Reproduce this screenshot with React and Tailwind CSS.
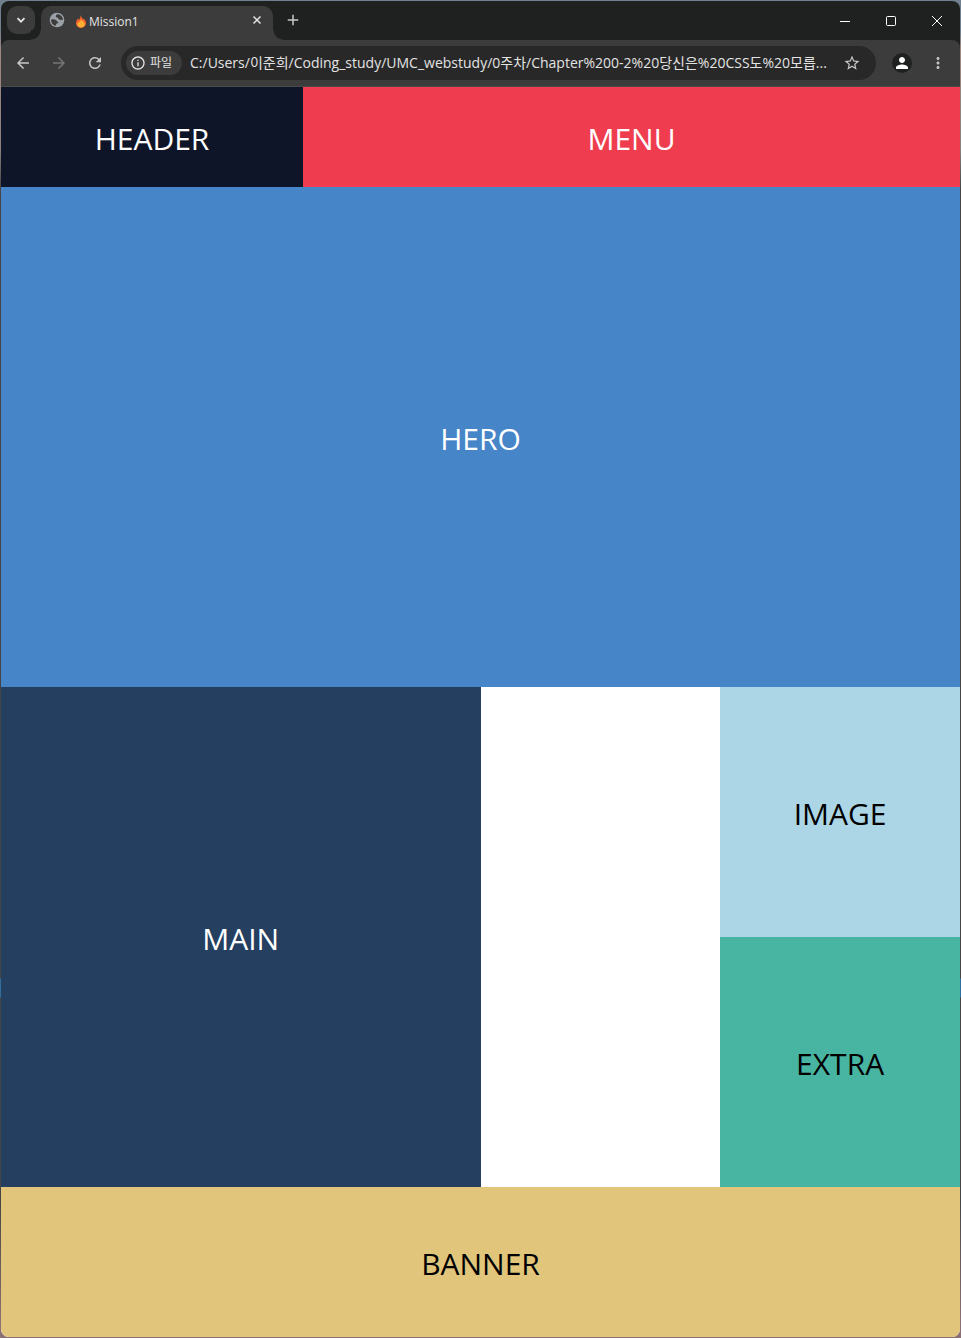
import React from "react";
import {
  MdAdd,
  MdArrowBack,
  MdArrowForward,
  MdInfoOutline,
  MdMoreVert,
  MdPerson,
  MdRefresh,
  MdStarBorder,
} from "react-icons/md";

const ADDRESS =
  "C:/Users/이준희/Coding_study/UMC_webstudy/0주차/Chapter%200-2%20당신은%20CSS도%20모릅...";

function Flame() {
  return (
    <svg viewBox="0 0 10 13" className="h-[13px] w-[10px] shrink-0" aria-hidden="true">
      <path d="M4.4 0C5 2.2 6.3 2.5 7 4.5L7.8 3.6C9 4.8 10 6.3 10 8.1 10 11 7.8 13 5 13S0 11 0 8.1C0 5.6 1.6 4.6 2.2 3.2 2.8 4 2.8 4.6 2.8 5 4.2 3.8 4.6 1.8 4.4 0Z" fill="#f2622a" />
      <path d="M5 4.5C6 5.8 8.8 7.1 8.8 9.3 8.8 11.3 7.1 12.5 5 12.5S1.2 11.3 1.2 9.3C1.2 7.6 4.5 6.7 5 4.5Z" fill="#ffad33" />
    </svg>
  );
}

function Globe() {
  return (
    <svg viewBox="0 0 16 16" className="size-4 shrink-0" aria-hidden="true">
      <circle cx="8" cy="8" r="7.3" fill="#9aa0a6" />
      <path d="M8.7 2.2C7.4 2.3 6.9 3.2 6.9 4.2 6.9 5.3 7.6 5.6 8.8 5.6 9.3 6.9 9.6 7.6 11 7.8L13.9 7.9C13.9 5 11.7 2.4 8.7 2.2Z" fill="#3c3c3c" />
      <path d="M2.1 7.7C3.3 7.2 5.7 7.2 6.8 7.9 8 8.6 8 9.7 9.3 9.9 9.4 11.1 8.5 11.5 7.2 11.7L6.8 13.8C4 13.4 2 10.9 2.1 7.7Z" fill="#3c3c3c" />
    </svg>
  );
}

function TabStrip() {
  return (
    <div className="flex h-[39px] items-end bg-[#1f2120]">
      <div className="flex h-[34px] items-start px-[6px]">
        <button aria-label="Search tabs" className="flex size-[28px] items-center justify-center rounded-[10px] bg-[#3c3c3c] text-[#e3e3e3]">
          <svg viewBox="0 0 10 10" className="size-[10px]"><path d="M1.5 3.2L5 6.7 8.5 3.2" fill="none" stroke="currentColor" strokeWidth="1.8" /></svg>
        </button>
      </div>
      <div className="relative flex h-[34px] w-[232px] items-center rounded-t-[10px] bg-[#3c3c3c] px-2 pb-[6px]">
        <span className="absolute bottom-0 left-[-10px] size-[10px] bg-[radial-gradient(circle_at_0_0,#1f2120_9px,#3c3c3c_10px)]" />
        <span className="absolute bottom-0 right-[-10px] size-[10px] bg-[radial-gradient(circle_at_100%_0,#1f2120_9px,#3c3c3c_10px)]" />
        <Globe />
        <div className="ml-[11px] flex flex-1 items-center gap-[3px] pt-[3px]">
          <Flame />
          <span className="text-[12px] leading-4 text-[#e3e3e3]">Mission1</span>
        </div>
        <button aria-label="Close tab" className="flex size-4 items-center justify-center text-[#e3e3e3]">
          <svg viewBox="0 0 10 10" className="size-[10px]"><path d="M1.5 1.5L8.5 8.5M8.5 1.5L1.5 8.5" stroke="currentColor" strokeWidth="1.5" /></svg>
        </button>
      </div>
      <button aria-label="New tab" className="ml-[11px] flex h-[28px] w-[18px] items-center justify-center self-start pt-[10px] text-[#c7c7c7]">
        <MdAdd className="size-[18px] shrink-0" />
      </button>
      <div className="ml-auto flex h-full text-white">
        <button aria-label="Minimize" className="flex w-[46px] items-center justify-center">
          <svg viewBox="0 0 10 10" className="size-[10px]"><path d="M0 5.5H10" stroke="currentColor" /></svg>
        </button>
        <button aria-label="Maximize" className="flex w-[46px] items-center justify-center">
          <svg viewBox="0 0 10 10" className="size-[10px]"><rect x=".5" y=".5" width="9" height="9" rx="1" fill="none" stroke="currentColor" /></svg>
        </button>
        <button aria-label="Close window" className="flex w-[46px] items-center justify-center">
          <svg viewBox="0 0 10 10" className="size-[10px]"><path d="M0 0L10 10M10 0L0 10" stroke="currentColor" /></svg>
        </button>
      </div>
    </div>
  );
}

function Toolbar() {
  return (
    <div className="bg-[#1f2120]">
      <div className="flex h-[47px] items-center rounded-t-[8px] border-b border-[#4a4a4a] bg-[#3c3c3c] px-[13px] text-[#c7c7c7]">
        <div className="flex gap-[18px]">
          <button aria-label="Back"><MdArrowBack className="size-[18px]" /></button>
          <button aria-label="Forward" className="text-[#757575]"><MdArrowForward className="size-[18px]" /></button>
          <button aria-label="Reload"><MdRefresh className="size-[18px]" /></button>
        </div>
        <div className="ml-[17px] flex h-[34px] min-w-0 flex-1 items-center rounded-full bg-[#282828] pl-[5px] pr-[15px]">
          <button className="flex h-6 w-[56px] shrink-0 items-center gap-1 rounded-full bg-[#3c3c3c] pl-1 text-[12px] text-[#e3e3e3]">
            <MdInfoOutline className="size-4" />
            파일
          </button>
          <input
            type="text"
            aria-label="Address"
            defaultValue={ADDRESS}
            className="ml-[8px] h-6 min-w-0 flex-1 bg-transparent pb-[2px] text-[14px] text-[#e3e3e3] outline-none"
          />
          <button aria-label="Bookmark" className="ml-2 shrink-0"><MdStarBorder className="size-[18px]" /></button>
        </div>
        <button aria-label="Profile" className="ml-4 flex size-5 items-center justify-center rounded-full bg-[#1f2120] text-white">
          <MdPerson className="size-[18px]" />
        </button>
        <button aria-label="Menu" className="ml-[17px]"><MdMoreVert className="size-[18px]" /></button>
      </div>
    </div>
  );
}

function Block({ as: Tag = "section", className, children }) {
  return <Tag className={`flex items-center justify-center pt-1 ${className}`}>{children}</Tag>;
}

export default function App() {
  return (
    <div className="bg-[linear-gradient(#70808e_0,#70808e_30px,#a08a82_50px,#8a807c_150px,#454545_190px,#454545_978px,#2f6f9f_979px,#2f6f9f_997px,#454545_998px,#454545_1200px,#8b7075_1320px)] p-px font-['Open_Sans','Noto_Sans_CJK_KR',sans-serif]">
      <div className="overflow-hidden rounded-[8px]">
        <TabStrip />
        <Toolbar />
        <div className="bg-white text-[30px] leading-10 text-black">
          <div className="grid h-[100px] grid-cols-[302fr_657fr] text-white">
            <Block as="header" className="bg-[#0f1528]">HEADER</Block>
            <Block as="nav" className="bg-[#ef3d4f]">MENU</Block>
          </div>
          <Block className="h-[500px] bg-[#4685c8] text-white">HERO</Block>
          <div className="flex h-[500px] justify-between">
            <Block as="main" className="w-1/2 bg-[#243f60] text-white">MAIN</Block>
            <aside className="grid w-1/4 grid-rows-2">
              <Block className="bg-[#acd6e5]">IMAGE</Block>
              <Block className="bg-[#48b4a2]">EXTRA</Block>
            </aside>
          </div>
          <Block as="footer" className="h-[150px] bg-[#e0c57a]">BANNER</Block>
        </div>
      </div>
    </div>
  );
}
